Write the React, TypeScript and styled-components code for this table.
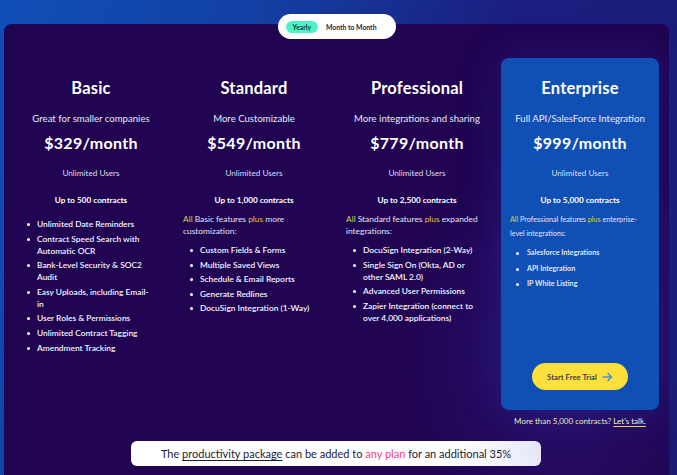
import React from "react";
import styled, { createGlobalStyle } from "styled-components";

const Global = createGlobalStyle`
  html, body { margin: 0; padding: 0; }
  body { width: 677px; height: 475px; overflow: hidden; font-family: "Lato", "Noto Sans", sans-serif; }
  * { box-sizing: border-box; }
`;

const Page = styled.div`
  position: relative;
  width: 677px;
  height: 475px;
  overflow: hidden;
  background: linear-gradient(110deg, #0f4fb6 0%, #1340a4 30%, #1a1f80 60%, #1b1a72 100%);
  padding: 24px 8px 0 4px;
`;

const Toggle = styled.div`
  position: absolute;
  top: 14px;
  left: calc(50% - 2px);
  transform: translateX(-50%);
  z-index: 2;
  width: 118px;
  height: 25px;
  border-radius: 13px;
  background: #ffffff;
  display: flex;
  align-items: center;
  padding: 0 8px;
  gap: 8px;
`;

const ToggleOption = styled.span<{ $active?: boolean }>`
  display: inline-flex;
  align-items: center;
  justify-content: center;
  height: 12px;
  padding: ${(p) => (p.$active ? "0 7px" : "0")};
  border-radius: 6px;
  background: ${(p) => (p.$active ? "#4ff2c6" : "transparent")};
  color: ${(p) => (p.$active ? "#103a30" : "#1b1a4a")};
  font-size: 6.8px;
  font-weight: 700;
  white-space: nowrap;
`;

const Board = styled.div`
  height: 451px;
  border-radius: 8px 8px 0 0;
  background: radial-gradient(ellipse 160px 220px at 560px 330px, #28126e 0%, #200452 100%);
  padding: 34px 0 0 8px;
  color: #ffffff;
`;

const Grid = styled.div`
  display: grid;
  grid-template-columns: repeat(4, 158px);
  column-gap: 5px;
  align-items: start;
`;

const Column = styled.div`
  display: flex;
  flex-direction: column;
  padding-top: 20px;
`;

const FeaturedWrap = styled.div`
  display: flex;
  flex-direction: column;
`;

const FeaturedCard = styled(Column)`
  height: 352px;
  border-radius: 8px;
  background: #1050b4;
  box-shadow: 0 0 40px rgba(40, 70, 210, 0.25);
`;

const Title = styled.h2`
  margin: 0;
  text-align: center;
  font-size: 16.5px;
  line-height: 20px;
  font-weight: 700;
  letter-spacing: 0.2px;
`;

const Tagline = styled.p`
  margin: 14px 0 0;
  text-align: center;
  font-size: 9.6px;
  line-height: 14px;
  color: #e8e8ff;
  white-space: nowrap;
`;

const Price = styled.div`
  margin-top: 7px;
  text-align: center;
  font-size: 16px;
  line-height: 20px;
  font-weight: 700;
  letter-spacing: 0.3px;
`;

const Users = styled.div`
  margin-top: 14px;
  text-align: center;
  font-size: 8.2px;
  line-height: 12px;
  color: #dedef6;
`;

const Contracts = styled.div`
  margin-top: 15px;
  text-align: center;
  font-size: 8.2px;
  line-height: 12px;
  font-weight: 700;
`;

const Intro = styled.p<{ $small?: boolean }>`
  margin: 7px 0 0;
  padding: ${(p) => (p.$small ? "0 12px 0 9px" : "0 10px 0 8px")};
  font-size: ${(p) => (p.$small ? "7.2px" : "8.4px")};
  line-height: ${(p) => (p.$small ? "14px" : "12px")};
  color: #e4e2f6;
`;

const Accent = styled.span<{ $tone: "all" | "plus" }>`
  color: ${(p) => (p.$tone === "all" ? "#c9d24a" : "#e6c43a")};
`;

const List = styled.ul<{ $top: number; $small?: boolean }>`
  list-style: none;
  margin: ${(p) => p.$top}px 0 0;
  padding: 0 15px 0 15px;
  display: flex;
  flex-direction: column;
  gap: ${(p) => (p.$small ? "3.5px" : "2.6px")};
`;

const Item = styled.li<{ $small?: boolean }>`
  display: flex;
  align-items: flex-start;
  gap: ${(p) => (p.$small ? "8px" : "7px")};
  font-size: ${(p) => (p.$small ? "7.2px" : "8.4px")};
  line-height: 12px;
  font-weight: 600;
  color: #f4f4ff;
  &::before {
    content: "";
    flex: 0 0 3px;
    width: 3px;
    height: 3px;
    margin-top: 5px;
    border-radius: 50%;
    background: #ffffff;
  }
`;

const TrialButton = styled.button`
  margin: auto auto 20px;
  width: 96px;
  height: 27px;
  border: none;
  border-radius: 14px;
  background: #fde03c;
  color: #2a2b4c;
  font-family: inherit;
  font-size: 7.8px;
  font-weight: 600;
  display: flex;
  align-items: center;
  justify-content: center;
  gap: 5px;
`;

const Note = styled.div`
  margin-top: 5px;
  text-align: center;
  font-size: 8px;
  line-height: 12px;
  color: #ebe6c2;
`;

const TalkLink = styled.a`
  color: #f4f0dc;
  text-decoration: underline;
  text-decoration-color: #f5d742;
  text-underline-offset: 2px;
`;

const Banner = styled.div`
  margin: 14px 0 0 119px;
  width: 410px;
  height: 25px;
  border-radius: 6px;
  background: linear-gradient(90deg, #ffffff 0%, #ffffff 80%, #e6e8f8 100%);
  display: flex;
  align-items: center;
  justify-content: center;
  font-size: 11px;
  color: #1c1a36;
`;

const PackageLink = styled.a`
  color: #1c1a36;
  text-decoration: underline;
  text-underline-offset: 2px;
`;

const Pink = styled.span`
  color: #ff3a80;
`;

const Arrow = () => (
  <svg width="11" height="10" viewBox="0 0 11 10" fill="none">
    <path
      d="M1 5h8.5M6 1.5 9.5 5 6 8.5"
      stroke="#4a8fe2"
      strokeWidth="1.6"
      strokeLinecap="round"
      strokeLinejoin="round"
    />
  </svg>
);

type Plan = {
  name: string;
  tagline: string;
  price: string;
  contracts: string;
  intro?: { base: string; tail: string };
  features: string[];
};

const plans: Plan[] = [
  {
    name: "Basic",
    tagline: "Great for smaller companies",
    price: "$329/month",
    contracts: "Up to 500 contracts",
    features: [
      "Unlimited Date Reminders",
      "Contract Speed Search with Automatic OCR",
      "Bank-Level Security & SOC2 Audit",
      "Easy Uploads, including Email-in",
      "User Roles & Permissions",
      "Unlimited Contract Tagging",
      "Amendment Tracking",
    ],
  },
  {
    name: "Standard",
    tagline: "More Customizable",
    price: "$549/month",
    contracts: "Up to 1,000 contracts",
    intro: { base: "Basic", tail: "more customization:" },
    features: [
      "Custom Fields & Forms",
      "Multiple Saved Views",
      "Schedule & Email Reports",
      "Generate Redlines",
      "DocuSign Integration (1-Way)",
    ],
  },
  {
    name: "Professional",
    tagline: "More integrations and sharing",
    price: "$779/month",
    contracts: "Up to 2,500 contracts",
    intro: { base: "Standard", tail: "expanded integrations:" },
    features: [
      "DocuSign Integration (2-Way)",
      "Single Sign On (Okta, AD or other SAML 2.0)",
      "Advanced User Permissions",
      "Zapier Integration (connect to over 4,000 applications)",
    ],
  },
];

const enterprise: Plan = {
  name: "Enterprise",
  tagline: "Full API/SalesForce Integration",
  price: "$999/month",
  contracts: "Up to 5,000 contracts",
  intro: { base: "Professional", tail: "enterprise-level integrations:" },
  features: ["Salesforce Integrations", "API Integration", "IP White Listing"],
};

function PlanBody({ plan, small }: { plan: Plan; small?: boolean }) {
  return (
    <>
      <Title>{plan.name}</Title>
      <Tagline>{plan.tagline}</Tagline>
      <Price>{plan.price}</Price>
      <Users>Unlimited Users</Users>
      <Contracts>{plan.contracts}</Contracts>
      {plan.intro && (
        <Intro $small={small}>
          <Accent $tone="all">All</Accent> {plan.intro.base} features{" "}
          <Accent $tone="plus">plus</Accent> {plan.intro.tail}
        </Intro>
      )}
      <List $top={plan.intro ? (small ? 6 : 7) : 12} $small={small}>
        {plan.features.map((f) => (
          <Item key={f} $small={small}>
            <span>{f}</span>
          </Item>
        ))}
      </List>
    </>
  );
}

export default function App() {
  return (
    <Page>
      <Global />
      <Toggle>
        <ToggleOption $active>Yearly</ToggleOption>
        <ToggleOption>Month to Month</ToggleOption>
      </Toggle>
      <Board>
        <Grid>
          {plans.map((p) => (
            <Column key={p.name}>
              <PlanBody plan={p} />
            </Column>
          ))}
          <FeaturedWrap>
            <FeaturedCard>
              <PlanBody plan={enterprise} small />
              <TrialButton>
                Start Free Trial
                <Arrow />
              </TrialButton>
            </FeaturedCard>
            <Note>
              More than 5,000 contracts? <TalkLink>Let's talk.</TalkLink>
            </Note>
          </FeaturedWrap>
        </Grid>
        <Banner>
          The&nbsp;<PackageLink>productivity package</PackageLink>&nbsp;can be added to&nbsp;
          <Pink>any plan</Pink>&nbsp;for an additional 35%
        </Banner>
      </Board>
    </Page>
  );
}
